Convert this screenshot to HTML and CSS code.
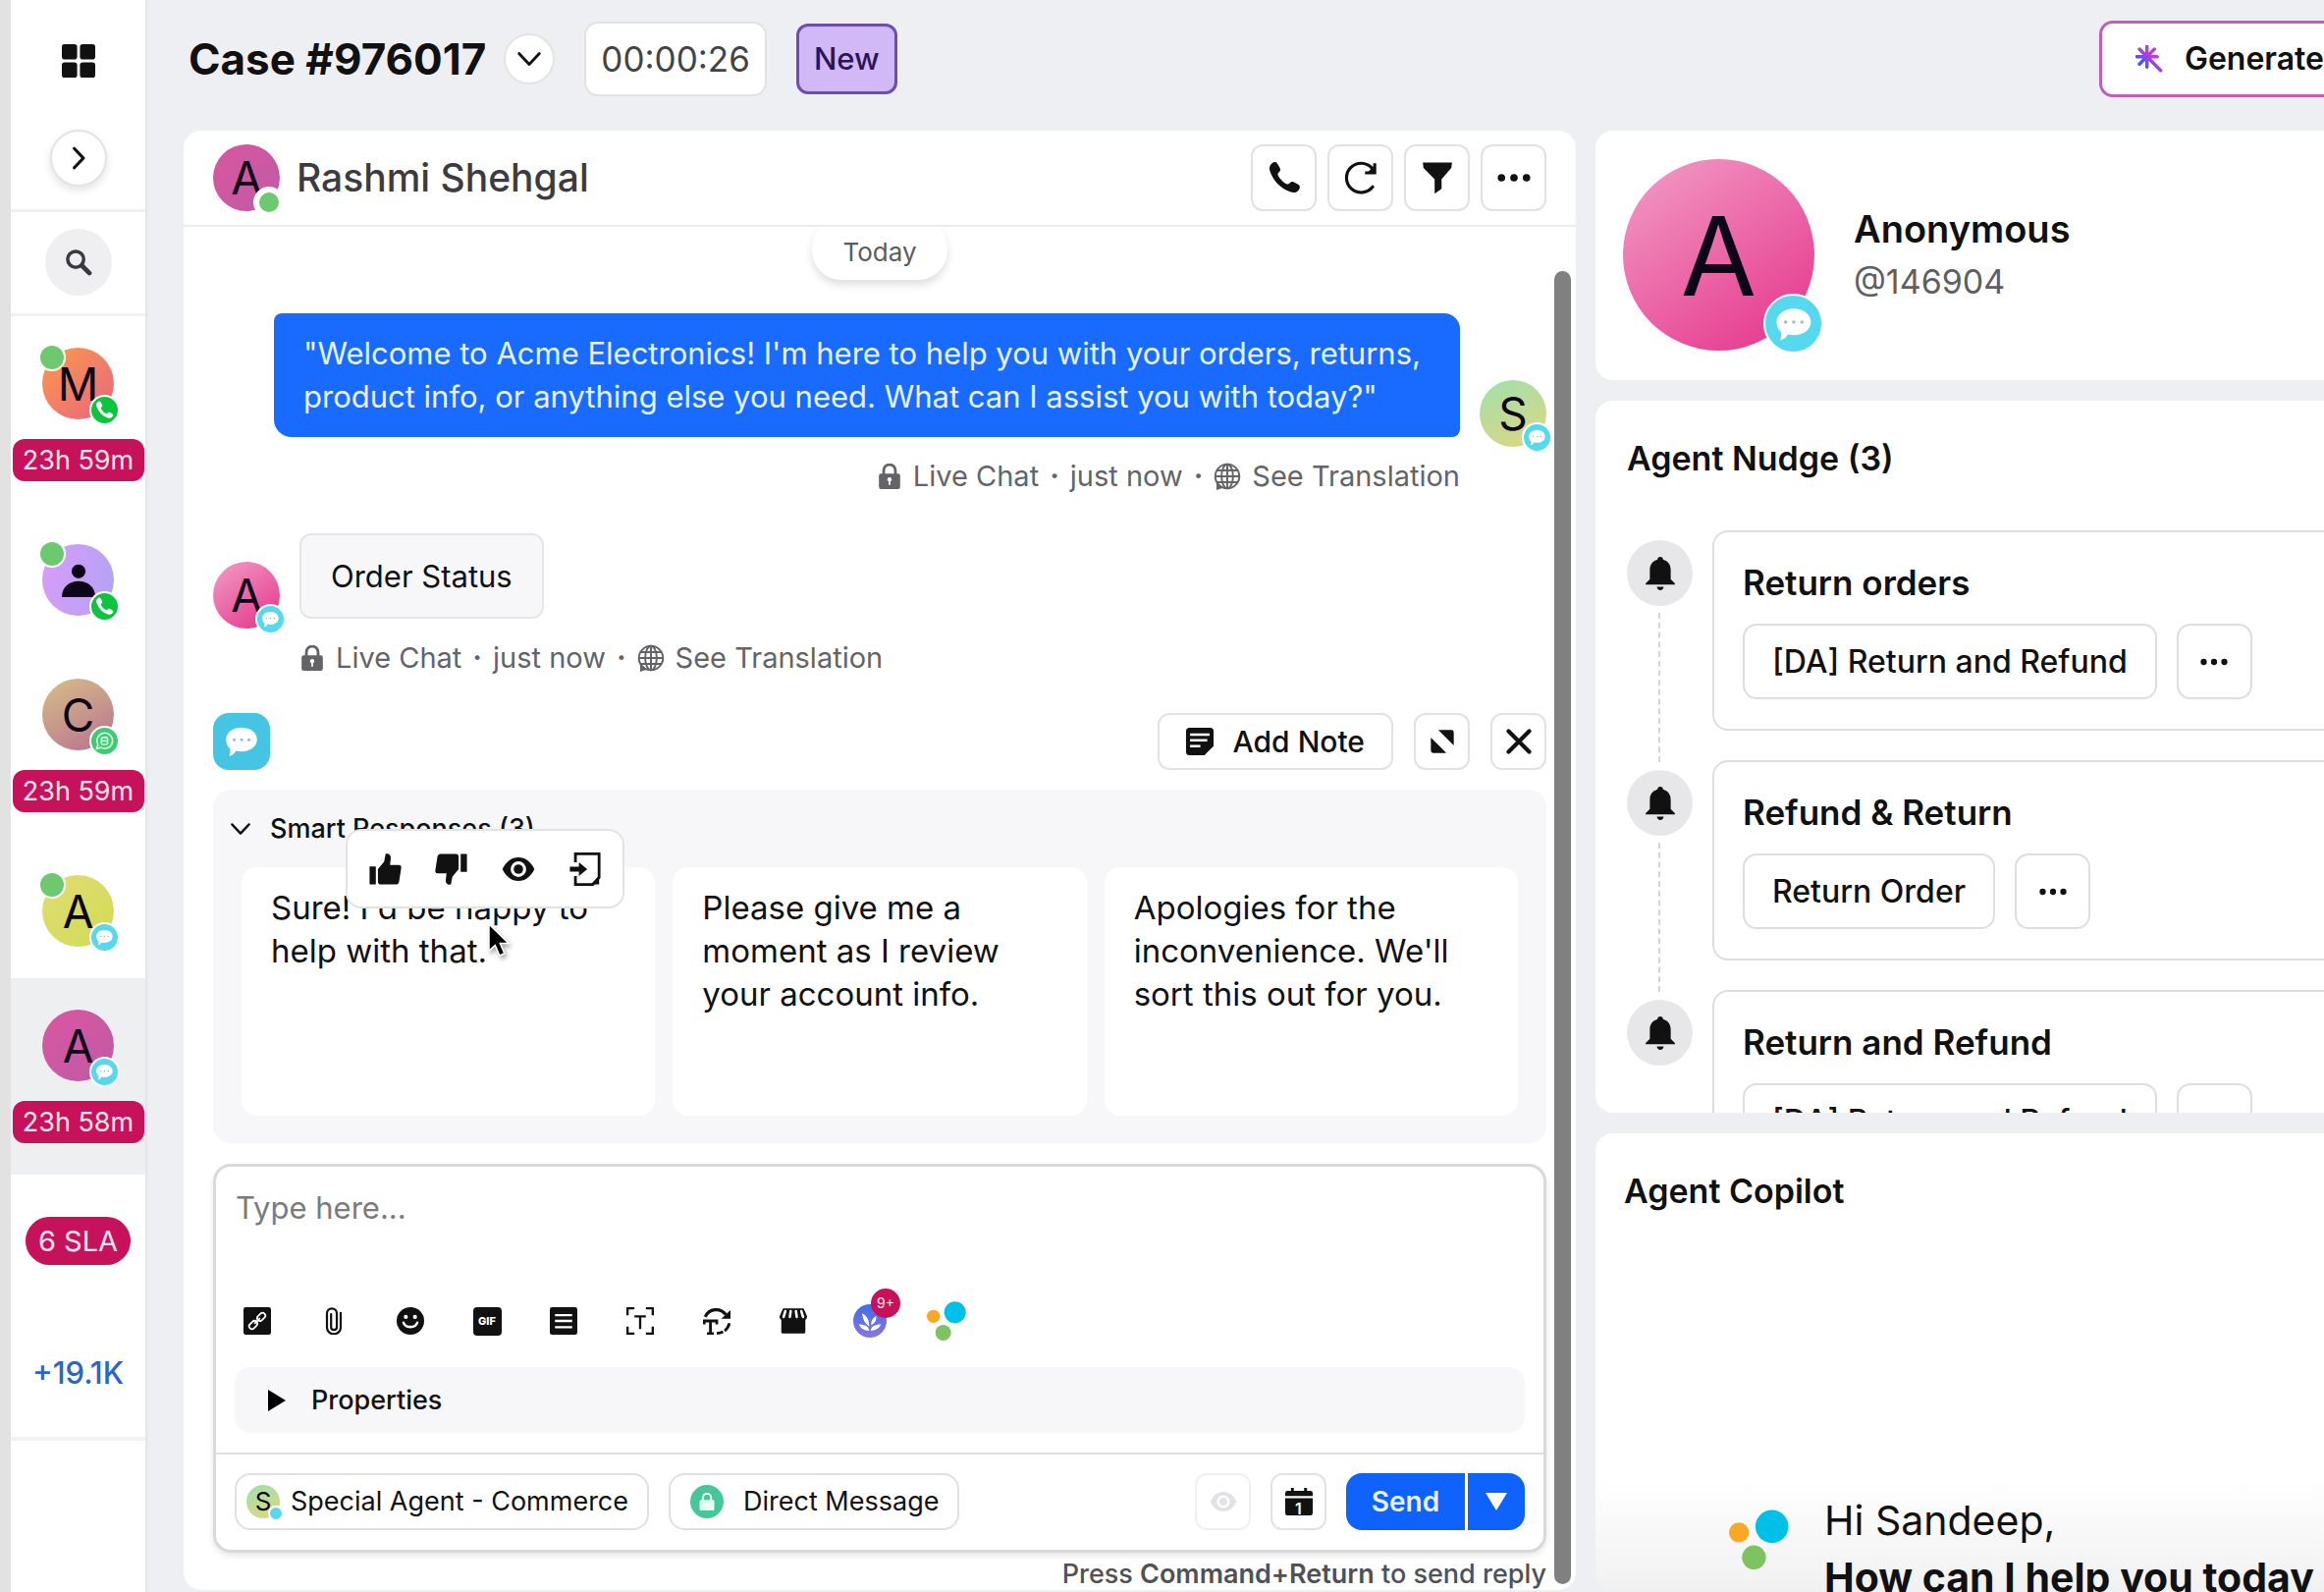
FILE: index.html
```html
<!DOCTYPE html>
<html lang="en">
  <head>
    <meta charset="utf-8">
    <meta name="viewport" content="width=device-width, initial-scale=1">
    <title>Case #976017</title>
    <link rel="stylesheet" href="styles.css">
  </head>
  <body>

    <!-- Icon set -->
    <svg class="sprite" aria-hidden="true">
      <defs>
        <linearGradient id="wandFill" x1="0" y1="1" x2="1" y2="0">
          <stop offset="0.2" stop-color="#2f5bff"/>
          <stop offset="0.6" stop-color="#c13bd6"/>
        </linearGradient>
        <linearGradient id="plantFill" x1="0" y1="0" x2="0" y2="1">
          <stop offset="0" stop-color="#3f6fe6"/>
          <stop offset="1" stop-color="#8a74dc"/>
        </linearGradient>
      </defs>
      <symbol id="grid" viewBox="0 0 24 24">
        <rect x="0" y="0" width="11" height="11" rx="2"/><rect x="13" y="0" width="11" height="11" rx="2"/>
        <rect x="0" y="13" width="11" height="11" rx="2"/><rect x="13" y="13" width="11" height="11" rx="2"/>
      </symbol>
      <symbol id="chevron-right" viewBox="0 0 24 24"><path d="M8 3l8.500 9L8 21" fill="none" stroke="currentColor" stroke-width="3" stroke-linecap="round" stroke-linejoin="round"/></symbol>
      <symbol id="chevron-down" viewBox="0 0 24 24"><path d="M2.500 7l9.500 10 9.500-10" fill="none" stroke="currentColor" stroke-width="2.600" stroke-linecap="round" stroke-linejoin="round"/></symbol>
      <symbol id="search" viewBox="0 0 24 24"><circle cx="9.500" cy="9.500" r="7" fill="none" stroke="currentColor" stroke-width="3"/><path d="M15 15l6.500 6.500" stroke="currentColor" stroke-width="4" stroke-linecap="round"/></symbol>
      <symbol id="phone" viewBox="0 0 24 24"><path d="M3.200 1.600C4.500.5 6.200.4 7 1.700l1.900 3.300c.7 1.300.2 2.300-.8 3.200-.9.800-.9 1.500-.3 2.600 1.300 2.300 3.100 4.100 5.400 5.400 1.100.6 1.800.6 2.600-.3.900-1 1.900-1.500 3.200-.8l3.300 1.900c1.300.8 1.200 2.500.1 3.800-1.500 1.900-3.600 2.300-6.200 1.300C9.300 19.500 4.500 14.700 1.900 7.800.9 5.200 1.300 3.100 3.200 1.600z"/></symbol>
      <symbol id="refresh" viewBox="0 0 24 24"><path d="M20.500 18.500A10.500 10.500 0 1 1 20 5" fill="none" stroke="currentColor" stroke-width="2.200" stroke-linecap="round"/><path d="M22 1.500v7h-7" fill="none" stroke="currentColor" stroke-width="2.200"/><path d="M22 3v5.500h-5.500z"/></symbol>
      <symbol id="filter" viewBox="0 0 24 24"><path d="M1.500 1h21L22 5l-7 8v7l-5 3.500V13L2 5z"/></symbol>
      <symbol id="dots" viewBox="0 0 24 24"><circle cx="3" cy="12" r="2.700"/><circle cx="12" cy="12" r="2.700"/><circle cx="21" cy="12" r="2.700"/></symbol>
      <symbol id="lock" viewBox="0 0 24 24"><path d="M6.500 11V6.500a5.500 5.500 0 0 1 11 0V11" fill="none" stroke="currentColor" stroke-width="2.600"/><rect x="2" y="9.500" width="20" height="14.500" rx="2"/><circle cx="12" cy="15" r="2" fill="#fff"/><path d="M11.200 15h1.600v5h-1.600z" fill="#fff"/></symbol>
      <symbol id="globe" viewBox="0 0 24 24"><g fill="none" stroke="currentColor" stroke-width="1.700"><circle cx="12" cy="12" r="10.500"/><ellipse cx="12" cy="12" rx="5" ry="10.500"/><path d="M12 1.500v21M1.500 12h21M3 6.800h18M3 17.200h18"/></g><path d="M2.500 17v7l6-2z"/></symbol>
      <symbol id="chat" viewBox="0 0 24 24"><path d="M12 2.500c6 0 10.500 3.500 10.500 8.200S18 18.800 12 18.800c-1.300 0-2.600-.1-3.700-.4-.9 1.700-2.200 3-4.600 3.600.7-1.700.8-3.300.5-5.100C2.500 15.400 1.500 13.200 1.500 10.700 1.500 6 6 2.500 12 2.500z" fill="#fff"/><g fill="#8bbfc4"><circle cx="7" cy="10.800" r="1"/><circle cx="12" cy="10.800" r="1"/><circle cx="17" cy="10.800" r="1"/></g></symbol>
      <symbol id="whatsapp" viewBox="0 0 24 24"><path d="M2 22l1.500-5.500A10 10 0 1 1 7.500 20.500z" fill="none" stroke="#d8ffe6" stroke-width="2"/><rect x="8" y="7.500" width="8" height="9" rx="2" fill="none" stroke="#d8ffe6" stroke-width="2"/><path d="M8 12h7" stroke="#d8ffe6" stroke-width="2"/></symbol>
      <symbol id="person" viewBox="0 0 24 24"><circle cx="12" cy="5.500" r="5"/><path d="M0 24c0-7 5-11.500 12-11.500S24 17 24 24z"/></symbol>
      <symbol id="note" viewBox="0 0 24 24"><path d="M3 0h18a3 3 0 0 1 3 3v13l-8 8H3a3 3 0 0 1-3-3V3a3 3 0 0 1 3-3z"/><path d="M3.500 6h17M3.500 11h15M3.500 16h9" stroke="#fff" stroke-width="2.200"/></symbol>
      <symbol id="expand" viewBox="0 0 24 24"><path d="M8.500 2H20a2 2 0 0 1 2 2v11.500zM2 8.500L15.500 22H4a2 2 0 0 1-2-2z"/></symbol>
      <symbol id="close" viewBox="0 0 24 24"><path d="M3 3l18 18M21 3L3 21" stroke="currentColor" stroke-width="3.600" stroke-linecap="round"/></symbol>
      <symbol id="thumb-up" viewBox="0 0 24 24"><path d="M1 10h4.500v13H1zM7 12l4.500-5.500L12.500 1c2.500-.5 4 1 3.700 3.500L15.700 9H22c1.500 0 2 1 1.700 2.500l-1.500 9.500c-.3 1.400-1 2-2.300 2H9c-1.300 0-2-.7-2-2z"/></symbol>
      <symbol id="eye" viewBox="0 0 24 24"><path d="M12 3.500c5 0 9 3.200 11.500 8.500C21 17.300 17 20.500 12 20.500S3 17.300.5 12C3 6.700 7 3.500 12 3.500z"/><circle cx="12" cy="12" r="5.600" fill="#fff"/><circle cx="12" cy="12" r="3.400"/></symbol>
      <symbol id="insert" viewBox="0 0 24 24"><path d="M5 7V1h17v17l-4.500 5H5v-6" fill="none" stroke="currentColor" stroke-width="2"/><path d="M22 17v6h-6z"/><path d="M1 10.300h6.500V7l6 5-6 5v-3.300H1z"/></symbol>
      <symbol id="pointer" viewBox="0 0 24 36"><path d="M2 2v27l6.300-5.600 4.500 10.600 5-2.200-4.500-10.300H22z" stroke="#fff" stroke-width="1.500"/></symbol>
      <symbol id="link" viewBox="0 0 24 24"><rect width="24" height="24" rx="2"/><g fill="none" stroke="#fff" stroke-width="1.500"><rect x="11.500" y="6" width="8" height="5" rx="2.500" transform="rotate(-45 15.500 8.500)"/><rect x="4.500" y="13" width="8" height="5" rx="2.500" transform="rotate(-45 8.500 15.500)"/><path d="M9.500 14.500l5-5"/></g></symbol>
      <symbol id="clip" viewBox="0 0 24 24"><path d="M18 5v12.500a6 6 0 0 1-12 0V5.500a4.300 4.300 0 0 1 8.600 0v11.800a2.500 2.500 0 0 1-5 0V6" fill="none" stroke="currentColor" stroke-width="1.900" stroke-linecap="round"/></symbol>
      <symbol id="smile" viewBox="0 0 24 24"><circle cx="12" cy="12" r="12"/><circle cx="8" cy="8.500" r="1.800" fill="#fff"/><circle cx="16" cy="8.500" r="1.800" fill="#fff"/><path d="M6 13.500c1.500 5 10.500 5 12 0" fill="none" stroke="#fff" stroke-width="2.200" stroke-linecap="round"/></symbol>
      <symbol id="template" viewBox="0 0 24 24"><rect width="24" height="24" rx="2"/><path d="M4.500 7h15M4.500 12h15M4.500 17.500h15" stroke="#fff" stroke-width="2"/></symbol>
      <symbol id="text-scan" viewBox="0 0 24 24"><path d="M1 7V1h6M17 1h6v6M23 17v6h-6M7 23H1v-6M7 8h10M12 8v11" fill="none" stroke="currentColor" stroke-width="2"/></symbol>
      <symbol id="text-sync" viewBox="0 0 24 24"><path d="M2 8.500C5 1 15 0 20 6.500" fill="none" stroke="currentColor" stroke-width="2.800"/><path d="M24 2.500V10h-8z"/><path d="M23 14c-1 5.500-5.500 8.500-11 8.800" fill="none" stroke="currentColor" stroke-width="2.400" stroke-dasharray="8 1.500"/><path d="M1 15v-3h11v3M6.500 12v11M3.500 23h6" fill="none" stroke="currentColor" stroke-width="2.400"/></symbol>
      <symbol id="store" viewBox="0 0 24 24"><path d="M3 1h18l3 7c0 1.500-.5 2.500-1.500 3v10.500c0 1-.5 1.500-1.500 1.500H3c-1 0-1.500-.5-1.500-1.500V11C.5 10.500 0 9.500 0 8z"/><path d="M5 3.500L3.500 8.500M9.700 3.500L9 8.500M14.300 3.500l.7 5M19 3.500l1.500 5" stroke="#fff" stroke-width="2.200" stroke-linecap="round"/></symbol>
      <symbol id="plant" viewBox="0 0 24 24"><circle cx="12" cy="12" r="12" fill="url(#plantFill)"/><path d="M11.500 19c-.5-3-3-4.500-7.500-4.500 1.500 3 4 4.500 7.500 4.500zM12.500 19c.5-3 3-4.500 7.500-4.500-1.500 3-4 4.500-7.500 4.500zM11.500 16C11.500 11 10 8.500 6.500 6.500c0 4 2 7 5 9.500zM13 15c-.3-3 1-5 3.500-6.500.5 3-1 5-3.500 6.500z" fill="#fff"/></symbol>
      <symbol id="trio" viewBox="0 0 60 60"><circle cx="43" cy="17" r="16.500" fill="#00c0e8"/><circle cx="10" cy="23" r="10" fill="#f9a825"/><circle cx="25" cy="48" r="12" fill="#7dc461"/></symbol>
      <symbol id="calendar" viewBox="0 0 24 24"><path d="M5 0h2.500v2.500h9V0H19v2.500h3a2 2 0 0 1 2 2V7H0V4.500a2 2 0 0 1 2-2h3zM0 9h24v13a2 2 0 0 1-2 2H2a2 2 0 0 1-2-2z"/></symbol>
      <symbol id="bell" viewBox="0 0 24 24"><path d="M12 0c1.300 0 2 .8 2 2 3.500 1 5.500 3.500 5.500 7.500v6.500l3 3v1h-21v-1l3-3V9.500C4.500 5.500 6.500 3 10 2c0-1.200.7-2 2-2zM9.500 21.500h5c-.3 1.500-1.200 2.500-2.500 2.500s-2.200-1-2.500-2.500z"/></symbol>
      <symbol id="wand" viewBox="0 0 24 24"><path d="M10 1v18M1 10h18M3.500 3.500L22 22M16.500 3.500l-13 13" stroke="url(#wandFill)" stroke-width="3" stroke-linecap="round"/></symbol>
    </svg>

    <div class="app">

      <!-- Case queue -->
      <nav class="rail" aria-label="Cases">
        <div class="rail__top">
          <button class="rail__apps" aria-label="Apps"><svg class="icon icon--lg"><use href="#grid"/></svg></button>
          <button class="round-button round-button--rail" aria-label="Expand"><svg class="icon icon--sm"><use href="#chevron-right"/></svg></button>
        </div>
        <div class="rail__search">
          <button class="search-button" aria-label="Search"><svg class="icon"><use href="#search"/></svg></button>
        </div>

        <a class="case" href="#case-m">
          <span class="avatar avatar--case tone-orange">M<i class="presence"></i><span class="channel channel--call"><svg><use href="#phone"/></svg></span></span>
          <span class="sla">23h 59m</span>
        </a>
        <a class="case" href="#case-guest">
          <span class="avatar avatar--case tone-violet"><svg class="icon icon--lg"><use href="#person"/></svg><i class="presence"></i><span class="channel channel--call"><svg><use href="#phone"/></svg></span></span>
        </a>
        <a class="case" href="#case-c">
          <span class="avatar avatar--case tone-clay">C<span class="channel channel--business"><svg><use href="#whatsapp"/></svg></span></span>
          <span class="sla">23h 59m</span>
        </a>
        <a class="case" href="#case-a">
          <span class="avatar avatar--case tone-lime">A<i class="presence"></i><span class="channel"><svg><use href="#chat"/></svg></span></span>
        </a>
        <a class="case case--active" href="#case-976017">
          <span class="avatar avatar--case tone-magenta">A<span class="channel"><svg><use href="#chat"/></svg></span></span>
          <span class="sla">23h 58m</span>
        </a>

        <div class="rail__summary">
          <span class="sla-count">6 SLA</span>
          <a class="rail__more" href="#all">+19.1K</a>
        </div>
      </nav>

      <div class="main">

        <header class="topbar">
          <h1 class="topbar__title">Case #976017</h1>
          <button class="round-button" aria-label="Case menu"><svg class="icon icon--sm"><use href="#chevron-down"/></svg></button>
          <span class="timer">00:00:26</span>
          <span class="status">New</span>
          <button class="generate"><svg class="icon"><use href="#wand"/></svg>Generate</button>
        </header>

        <div class="columns">

          <!-- Conversation -->
          <section class="panel conversation">
            <div class="conversation__head">
              <span class="avatar tone-magenta">A<i class="presence presence--head"></i></span>
              <h2 class="conversation__name">Rashmi Shehgal</h2>
              <div class="conversation__tools">
                <button class="tool" aria-label="Call"><svg class="icon icon--lg"><use href="#phone"/></svg></button>
                <button class="tool" aria-label="Refresh"><svg class="icon icon--lg"><use href="#refresh"/></svg></button>
                <button class="tool" aria-label="Filter"><svg class="icon icon--lg"><use href="#filter"/></svg></button>
                <button class="tool" aria-label="More"><svg class="icon icon--lg"><use href="#dots"/></svg></button>
              </div>
            </div>

            <div class="conversation__body">
              <span class="day">Today</span>

              <div class="message message--out">
                <p class="bubble bubble--out">"Welcome to Acme Electronics! I'm here to help you with your orders, returns,<br>product info, or anything else you need. What can I assist you with today?"</p>
                <span class="avatar tone-mint">S<span class="channel channel--edge"><svg><use href="#chat"/></svg></span></span>
                <div class="meta">
                  <svg class="icon icon--sm"><use href="#lock"/></svg><span>Live Chat</span><b>·</b><span>just now</span><b>·</b><svg class="icon"><use href="#globe"/></svg><a href="#translate">See Translation</a>
                </div>
              </div>

              <div class="message message--in">
                <span class="avatar tone-pink">A<span class="channel channel--edge"><svg><use href="#chat"/></svg></span></span>
                <p class="bubble bubble--in">Order Status</p>
                <div class="meta">
                  <svg class="icon icon--sm"><use href="#lock"/></svg><span>Live Chat</span><b>·</b><span>just now</span><b>·</b><svg class="icon"><use href="#globe"/></svg><a href="#translate">See Translation</a>
                </div>
              </div>

              <div class="reply-bar">
                <span class="reply-bar__channel"><svg><use href="#chat"/></svg></span>
                <button class="small-button small-button--note"><svg class="icon"><use href="#note"/></svg>Add Note</button>
                <button class="small-button" aria-label="Expand editor"><svg class="icon"><use href="#expand"/></svg></button>
                <button class="small-button" aria-label="Close editor"><svg class="icon"><use href="#close"/></svg></button>
              </div>

              <div class="smart">
                <button class="smart__title"><svg class="icon icon--xs"><use href="#chevron-down"/></svg>Smart Responses (3)</button>
                <div class="smart__list">
                  <button class="smart__card">Sure! I'd be happy to help with that.</button>
                  <button class="smart__card">Please give me a moment as I review your account info.</button>
                  <button class="smart__card">Apologies for the inconvenience. We'll sort this out for you.</button>
                </div>
                <div class="feedback">
                  <button aria-label="Good response"><svg class="icon icon--lg"><use href="#thumb-up"/></svg></button>
                  <button aria-label="Bad response"><svg class="icon icon--lg icon--flip"><use href="#thumb-up"/></svg></button>
                  <button aria-label="Preview"><svg class="icon icon--lg"><use href="#eye"/></svg></button>
                  <button aria-label="Insert"><svg class="icon icon--lg"><use href="#insert"/></svg></button>
                </div>
                <svg class="pointer"><use href="#pointer"/></svg>
              </div>

              <form class="composer">
                <textarea class="composer__text" placeholder="Type here..." aria-label="Reply"></textarea>
                <div class="composer__tools">
                  <button type="button" aria-label="Link"><svg class="icon"><use href="#link"/></svg></button>
                  <button type="button" aria-label="Attach"><svg class="icon"><use href="#clip"/></svg></button>
                  <button type="button" aria-label="Emoji"><svg class="icon"><use href="#smile"/></svg></button>
                  <button type="button"><span class="gif">GIF</span></button>
                  <button type="button" aria-label="Templates"><svg class="icon"><use href="#template"/></svg></button>
                  <button type="button" aria-label="Text"><svg class="icon"><use href="#text-scan"/></svg></button>
                  <button type="button" aria-label="Rephrase"><svg class="icon"><use href="#text-sync"/></svg></button>
                  <button type="button" aria-label="Store"><svg class="icon"><use href="#store"/></svg></button>
                  <button type="button" aria-label="Suggestions"><svg class="icon icon--lg"><use href="#plant"/></svg><span class="count">9+</span></button>
                  <button type="button" aria-label="Copilot"><svg class="icon icon--xl"><use href="#trio"/></svg></button>
                </div>
                <button type="button" class="properties"><i class="triangle"></i>Properties</button>
                <div class="composer__foot">
                  <button type="button" class="chip"><span class="avatar avatar--mini tone-mint">S<span class="channel channel--mini"></span></span>Special Agent - Commerce</button>
                  <button type="button" class="chip chip--direct"><span class="chip__lock"><svg><use href="#lock"/></svg></span>Direct Message</button>
                  <button type="button" class="small-button composer__preview" aria-label="Preview" disabled><svg class="icon"><use href="#eye"/></svg></button>
                  <button type="button" class="small-button calendar" aria-label="Schedule"><svg class="icon"><use href="#calendar"/></svg><span class="calendar__day">1</span></button>
                  <div class="send">
                    <button type="button" class="send__main">Send</button>
                    <button type="button" class="send__more" aria-label="Send options"><i class="triangle triangle--down"></i></button>
                  </div>
                </div>
              </form>
              <p class="hint">Press <strong>Command+Return</strong> to send reply</p>
            </div>
            <div class="scrollbar"></div>
          </section>

          <!-- Customer and assistant panels -->
          <aside class="side">
            <section class="panel profile">
              <span class="avatar avatar--xl tone-pink">A<span class="channel channel--xl"><svg><use href="#chat"/></svg></span></span>
              <div>
                <h2 class="profile__name">Anonymous</h2>
                <p class="profile__handle">@146904</p>
              </div>
            </section>

            <section class="panel nudges">
              <h2 class="side__title">Agent Nudge (3)</h2>
              <ul class="nudges__list">
                <li class="nudge">
                  <span class="nudge__bell"><svg class="icon icon--lg"><use href="#bell"/></svg></span>
                  <div class="nudge__card">
                    <h3>Return orders</h3>
                    <button class="action">[DA] Return and Refund</button>
                    <button class="action action--more" aria-label="More"><svg class="icon"><use href="#dots"/></svg></button>
                  </div>
                </li>
                <li class="nudge">
                  <span class="nudge__bell"><svg class="icon icon--lg"><use href="#bell"/></svg></span>
                  <div class="nudge__card">
                    <h3>Refund &amp; Return</h3>
                    <button class="action">Return Order</button>
                    <button class="action action--more" aria-label="More"><svg class="icon"><use href="#dots"/></svg></button>
                  </div>
                </li>
                <li class="nudge">
                  <span class="nudge__bell"><svg class="icon icon--lg"><use href="#bell"/></svg></span>
                  <div class="nudge__card">
                    <h3>Return and Refund</h3>
                    <button class="action">[DA] Return and Refund</button>
                    <button class="action action--more" aria-label="More"><svg class="icon"><use href="#dots"/></svg></button>
                  </div>
                </li>
              </ul>
            </section>

            <section class="panel copilot">
              <h2 class="side__title">Agent Copilot</h2>
              <div class="greeting">
                <svg class="greeting__logo"><use href="#trio"/></svg>
                <p>Hi Sandeep,<br><strong>How can I help you today</strong></p>
              </div>
            </section>
          </aside>

        </div>
      </div>
    </div>

  </body>
</html>
```
FILE: styles.css
```css
* { box-sizing: border-box; }

body {
  margin: 0;
  background: #eeeff2;
  color: #111;
  font: 31px/44px Inter, "Liberation Sans", sans-serif;
}

h1, h2, h3, p, ul { margin: 0; padding: 0; }
ul { list-style: none; }
a { color: inherit; text-decoration: none; }

button {
  padding: 0;
  border: 0;
  background: none;
  color: inherit;
  font: inherit;
}

.sprite { position: absolute; width: 0; height: 0; }

.icon {
  display: block;
  flex: none;
  width: 28px; height: 28px;
  fill: currentColor;
}
.icon--xs { width: 22px; height: 22px; }
.icon--sm { width: 26px; height: 26px; }
.icon--lg { width: 34px; height: 34px; }
.icon--xl { width: 40px; height: 40px; }
.icon--flip { transform: rotate(180deg); }

.app {
  display: flex;
  height: 100vh;
  overflow: hidden;
  border-left: 11px solid #e2e2e2;
}

/* avatars */
.avatar {
  position: relative;
  display: flex;
  flex: none;
  align-items: center;
  justify-content: center;
  width: 68px; height: 68px;
  border-radius: 50%;
  color: #0d0618;
  font-size: 46px;
}
.avatar--case { width: 73px; height: 73px; }
.avatar--xl { width: 195px; height: 195px; font-size: 112px; }
.avatar--mini { width: 34px; height: 34px; font-size: 26px; }

.tone-orange { background: linear-gradient(135deg, #f99a4c, #e8667f); }
.tone-violet { background: linear-gradient(100deg, #d79cf8, #b3a3f5); }
.tone-clay { background: linear-gradient(150deg, #d5c088, #b9708f); }
.tone-lime { background: linear-gradient(135deg, #e2dc74, #cfdc55); }
.tone-magenta { background: linear-gradient(135deg, #d9569f, #bf5ba6); }
.tone-pink { background: linear-gradient(145deg, #f193c0 10%, #e63c90 90%); }
.tone-mint { background: linear-gradient(155deg, #9fe0ae, #e0d67e); }

.presence {
  position: absolute;
  top: -4px; left: -4px;
  width: 28px; height: 28px;
  border: 2px solid #fff;
  border-radius: 50%;
  background: #6dc96f;
}
.presence--head {
  top: 43px; left: 41px;
  width: 32px; height: 32px;
  border-width: 6px;
}

.channel {
  position: absolute;
  right: -6px; bottom: -6px;
  display: flex;
  align-items: center;
  justify-content: center;
  width: 31px; height: 31px;
  border: 2px solid #fff;
  border-radius: 50%;
  background: #56d8ee;
}
.channel svg { width: 70%; height: 70%; }
.channel--call { background: #0cc53f; fill: #fff; }
.channel--business { background: #3ecb74; }
.channel--mini { right: -4px; bottom: -3px; width: 16px; height: 16px; }
.channel--xl { right: -9px; bottom: -3px; width: 61px; height: 61px; }

/* left rail */
.rail {
  flex: none;
  width: 137px;
  background: #fff;
  box-shadow: 1px 0 3px #dcdde0;
  font-size: 27px;
  text-align: center;
}
.rail__top, .rail__search {
  display: flex;
  flex-direction: column;
  align-items: center;
  border-bottom: 3px solid #f1f1f3;
}
.rail__top { height: 216px; padding-top: 45px; gap: 53px; }
.rail__search { height: 106px; padding-top: 17px; }

.round-button {
  display: flex;
  align-items: center;
  justify-content: center;
  flex: none;
  width: 52px; height: 52px;
  border: 2px solid #e4e4e6;
  border-radius: 50%;
  background: #fff;
}
.round-button--rail {
  width: 58px; height: 58px;
  box-shadow: 0 4px 8px #e4e4e4;
}
.search-button {
  display: flex;
  align-items: center;
  justify-content: center;
  width: 68px; height: 68px;
  border-radius: 50%;
  background: #efeff2;
  color: #3a3a3e;
}

.case {
  display: flex;
  flex-direction: column;
  align-items: center;
  gap: 20px;
  padding: 32px 0;
}
.case--active { background: #eeeff1; }

.sla {
  width: 134px;
  border-radius: 12px;
  background: #c6125a;
  color: #ffe3ee;
  line-height: 43px;
}
.rail__summary {
  display: flex;
  flex-direction: column;
  align-items: center;
  gap: 88px;
  height: 271px;
  padding-top: 43px;
  border-bottom: 4px solid #f1f1f3;
}
.sla-count {
  padding: 0 13px;
  border-radius: 25px;
  background: #c6125a;
  color: #ffe3ee;
  font-size: 29px;
  line-height: 49px;
}
.rail__more { color: #2a66c8; font-size: 31px; font-weight: 500; }

/* top bar */
.main {
  flex: 1;
  display: flex;
  flex-direction: column;
  min-width: 0;
  padding-left: 39px;
}
.topbar {
  display: flex;
  flex: none;
  align-items: center;
  height: 133px;
  padding: 0 0 13px 5px;
}
.topbar__title { margin-right: 18px; font-size: 44px; font-weight: 700; }
.timer {
  margin: 0 30px;
  padding: 0 15px;
  border: 2px solid #e2e2e5;
  border-radius: 14px;
  background: #fff;
  color: #444;
  font-size: 35px;
  line-height: 72px;
}
.status {
  padding: 0 15px;
  border: 3px solid #6a4fb0;
  border-radius: 12px;
  background: #d0b9f6;
  color: #2d1457;
  font-size: 31px;
  font-weight: 500;
  line-height: 66px;
}
.generate {
  display: flex;
  align-items: center;
  gap: 22px;
  height: 78px;
  margin-left: auto;
  padding-left: 34px;
  border: 3px solid #bf5fb8;
  border-right: 0;
  border-radius: 14px 0 0 14px;
  background: #fff;
  font-size: 32px;
  font-weight: 600;
}

.columns {
  flex: 1;
  display: grid;
  grid-template-columns: minmax(0, 1418fr) minmax(0, 742fr);
  gap: 20px;
  min-height: 0;
}
.panel { border-radius: 18px; background: #fff; overflow: hidden; }

/* conversation */
.conversation {
  position: relative;
  display: flex;
  flex-direction: column;
  margin-bottom: 2px;
}
.conversation__head {
  display: flex;
  flex: none;
  align-items: center;
  height: 98px;
  padding: 0 30px;
  border-bottom: 2px solid #ececee;
}
.conversation__name {
  margin-left: 17px;
  color: #3c3c40;
  font-size: 39px;
  font-weight: 500;
}
.conversation__tools { display: flex; gap: 11px; margin-left: auto; }
.tool, .small-button {
  position: relative;
  display: flex;
  align-items: center;
  justify-content: center;
  flex: none;
  width: 67px; height: 68px;
  border: 2px solid #e2e2e4;
  border-radius: 12px;
  background: #fff;
}
.small-button { width: 57px; height: 58px; }

.conversation__body {
  flex: 1;
  display: flex;
  flex-direction: column;
  min-height: 0;
  padding: 0 30px;
  overflow: hidden;
}
.day {
  align-self: center;
  flex: none;
  margin: -8px 0 34px;
  padding: 12px 31px 6px;
  border-radius: 30px;
  background: #fff;
  box-shadow: 0 5px 8px #dfdfe1;
  color: #5c5c60;
  font-size: 26px;
}

.message {
  display: grid;
  gap: 20px;
  margin-bottom: 38px;
}
.message--out {
  grid-template-columns: 1fr auto;
  padding-left: 62px;
}
.message--in {
  grid-template-columns: auto 1fr;
  margin-bottom: 36px;
}
.message .avatar { align-self: end; margin-bottom: -10px; }
.bubble { justify-self: start; }
.bubble--out {
  justify-self: stretch;
  padding: 19px 30px;
  border-radius: 8px 16px 8px 18px;
  background: #196bff;
  color: #e4f4ff;
  white-space: nowrap;
}
.bubble--in {
  padding: 19px 30px;
  border: 2px solid #e6e6e9;
  border-radius: 12px;
  background: #f7f7fa;
  line-height: 45px;
}
.meta {
  display: flex;
  align-items: center;
  gap: 11px;
  color: #646468;
  font-size: 29px;
  line-height: 40px;
}
.message--out .meta { grid-column: 1; justify-content: flex-end; }
.message--in .meta { grid-column: 2; }

.reply-bar { display: flex; gap: 21px; margin-bottom: 20px; }
.reply-bar__channel {
  display: flex;
  align-items: center;
  justify-content: center;
  width: 58px; height: 58px;
  margin-right: auto;
  border-radius: 16px;
  background: #46c4e3;
}
.reply-bar__channel svg { width: 36px; height: 36px; }
.small-button--note {
  gap: 20px;
  width: auto;
  padding: 0 27px;
  font-size: 30px;
  font-weight: 500;
}

.smart {
  position: relative;
  margin-bottom: 21px;
  padding: 0 29px 28px;
  border-radius: 18px;
  background: #f7f7fa;
}
.smart__title {
  display: flex;
  align-items: center;
  gap: 19px;
  height: 79px;
  margin-left: -12px;
  font-size: 27px;
  font-weight: 500;
}
.smart__list {
  display: grid;
  grid-template-columns: repeat(3, 1fr);
  gap: 18px;
}
.smart__card {
  display: flex;
  height: 253px;
  padding: 19px 30px 0;
  border-radius: 16px;
  background: #fff;
  font-size: 33px;
  text-align: left;
}
.feedback {
  position: absolute;
  top: 40px; left: 135px;
  display: flex;
  align-items: center;
  gap: 34px;
  height: 81px;
  padding: 0 21px;
  border: 2px solid #e2e2e5;
  border-radius: 16px;
  background: #fff;
}
.pointer {
  position: absolute;
  top: 134px; left: 279px;
  width: 24px; height: 38px;
  filter: drop-shadow(2px 3px 2px #aaa);
}

/* reply editor */
.composer {
  flex: none;
  border: 3px solid #d9d9dc;
  border-radius: 18px;
  box-shadow: 0 3px 6px #e6e6e8;
}
.composer__text {
  display: block;
  width: 100%; height: 137px;
  padding: 20px;
  border: 0;
  background: none;
  font: inherit;
  resize: none;
}
.composer__text::placeholder { color: #7b7b7e; }
.composer__tools {
  display: flex;
  gap: 38px;
  padding: 0 22px;
}
.composer__tools button {
  position: relative;
  display: flex;
  align-items: center;
  justify-content: center;
  width: 40px; height: 40px;
}
.gif {
  width: 29px; height: 29px;
  border-radius: 4px;
  background: #111;
  color: #fff;
  font-size: 11px;
  font-weight: 800;
  line-height: 29px;
}
.count {
  position: absolute;
  top: -13px; right: -11px;
  width: 30px; height: 30px;
  border-radius: 50%;
  background: #c6125a;
  color: #ffe3ee;
  font-size: 14px;
  line-height: 30px;
}
.properties {
  display: flex;
  align-items: center;
  gap: 26px;
  width: calc(100% - 38px);
  height: 67px;
  margin: 27px 19px 20px;
  padding-left: 34px;
  border-radius: 16px;
  background: #f7f7fa;
  font-size: 27px;
  font-weight: 500;
}
.triangle {
  border: 11px solid transparent;
  border-left: 18px solid #000;
  border-right: 0;
}
.triangle--down {
  border: 11px solid transparent;
  border-top: 18px solid #fff;
  border-bottom: 0;
}
.composer__foot {
  display: flex;
  align-items: center;
  gap: 20px;
  padding: 19px 19px 20px;
  border-top: 2px solid #dedee0;
}
.chip {
  display: flex;
  align-items: center;
  gap: 11px;
  height: 58px;
  padding: 0 19px 0 10px;
  border: 2px solid #e0e0e3;
  border-radius: 16px;
  font-size: 27px;
}
.chip--direct { gap: 20px; padding-left: 20px; }
.chip__lock {
  display: flex;
  align-items: center;
  justify-content: center;
  width: 34px; height: 34px;
  border-radius: 50%;
  background: #45c79a;
}
.chip__lock svg { width: 18px; height: 18px; color: #fff; fill: #e6fff5; }
.composer__preview { margin-left: auto; border-color: #f0f0f2; color: #e2e2e4; }
.calendar__day {
  position: absolute;
  top: 24px;
  color: #fff;
  font-size: 16px;
  font-weight: 600;
  line-height: 20px;
}
.send { display: flex; gap: 3px; }
.send button {
  display: flex;
  align-items: center;
  justify-content: center;
  height: 58px;
  background: #0f62fb;
  color: #e8f1ff;
  font-size: 28px;
  font-weight: 600;
}
.send .send__main { width: 121px; border-radius: 16px 0 0 16px; }
.send .send__more { width: 58px; border-radius: 0 16px 16px 0; }

.hint {
  margin-top: 4px;
  color: #515155;
  font-size: 27px;
  font-weight: 500;
  line-height: 36px;
  text-align: right;
}
.hint strong { font-weight: 600; }

.scrollbar {
  position: absolute;
  top: 143px; right: 5px; bottom: 6px;
  width: 17px;
  border-radius: 9px;
  background: #808080;
}

/* right column */
.side {
  display: flex;
  flex-direction: column;
  gap: 21px;
  min-height: 0;
}
.side .panel { border-radius: 18px 0 0 18px; }
.side__title { font-size: 34px; font-weight: 600; }

.profile {
  display: flex;
  flex: none;
  align-items: center;
  gap: 40px;
  padding: 29px 28px 30px;
}
.profile__name { font-size: 38px; font-weight: 600; line-height: 54px; }
.profile__handle { color: #5f5f63; font-size: 34px; line-height: 54px; }

.nudges { flex: 688 1 0; padding: 37px 0 0 32px; }
.nudges__list {
  display: flex;
  flex-direction: column;
  gap: 30px;
  margin-top: 51px;
}
.nudge { position: relative; display: flex; gap: 20px; }
.nudge::before {
  content: "";
  position: absolute;
  top: 84px; bottom: -32px; left: 32px;
  border-left: 2px dashed #d4d4d8;
}
.nudge:last-child::before { display: none; }
.nudge__bell {
  display: flex;
  flex: none;
  align-items: center;
  justify-content: center;
  width: 67px; height: 67px;
  margin-top: 10px;
  border-radius: 50%;
  background: #e7e7ea;
}
.nudge__card {
  flex: 1;
  display: flex;
  flex-wrap: wrap;
  gap: 20px;
  padding: 29px 29px 30px;
  border: 2px solid #dedee2;
  border-right: 0;
  border-radius: 16px 0 0 16px;
}
.nudge__card h3 { width: 100%; font-size: 35px; font-weight: 600; }
.action {
  display: flex;
  align-items: center;
  justify-content: center;
  height: 77px;
  padding: 0 28px;
  border: 2px solid #dedee2;
  border-radius: 14px;
  font-size: 32px;
  font-weight: 500;
}
.action--more { width: 77px; padding: 0; }

.copilot {
  display: flex;
  flex: 430 1 0;
  flex-direction: column;
  justify-content: space-between;
  padding: 37px 0 0 29px;
  background: linear-gradient(#fff 75%, #f1f1f2);
}
.greeting {
  display: flex;
  gap: 36px;
  height: 102px;
  padding-left: 107px;
  font-size: 41px;
  line-height: 58px;
  white-space: nowrap;
}
.greeting__logo { flex: none; width: 61px; height: 61px; margin-top: 18px; }
.greeting strong { font-weight: 700; }
```
